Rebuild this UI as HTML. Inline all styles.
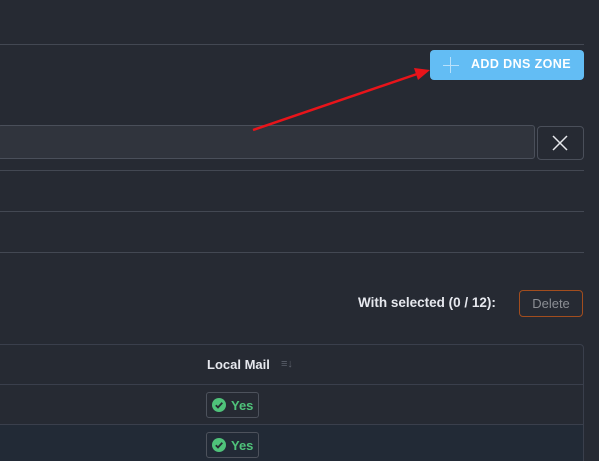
<!DOCTYPE html><html style="overflow:hidden;height:461px"><head><style>
body{margin:0;width:599px;height:461px;background:#262a33;font-family:"Liberation Sans",sans-serif;position:relative;overflow:hidden}
.a{position:absolute}
.hl{position:absolute;left:0;width:584px;height:1px;background:#434853}
</style></head><body>
<div class="hl" style="top:44px"></div>
<div class="a" style="left:430px;top:50px;width:154px;height:30px;background:#63bdf4;border-radius:4px"></div>
<div class="a" style="left:443px;top:65px;width:16px;height:1px;background:#b9e1fb"></div>
<div class="a" style="left:450px;top:57px;width:1px;height:16px;background:#b9e1fb"></div>
<div class="a" style="left:471px;top:57px;color:#fff;font-size:12.5px;font-weight:bold;letter-spacing:0.4px">ADD DNS ZONE</div>
<div class="a" style="left:-2px;top:125px;width:537px;height:34px;background:#30343d;border:1px solid #4a4f5a;border-radius:3px;box-sizing:border-box"></div>
<div class="a" style="left:537px;top:126px;width:47px;height:34px;border:1px solid #4a4f5a;border-radius:4px;box-sizing:border-box"></div>
<svg class="a" style="left:552px;top:135px" width="16" height="16"><path d="M1 1L15 15M15 1L1 15" stroke="#e6e8ec" stroke-width="1.5"/></svg>
<div class="hl" style="top:170px"></div>
<div class="hl" style="top:211px"></div>
<div class="hl" style="top:252px"></div>
<svg class="a" style="left:0;top:0" width="599" height="200"><path d="M253 130L420 73" stroke="#e8141a" stroke-width="2.5"/><path d="M430 70L414 68L418 80Z" fill="#e8141a"/></svg>
<div class="a" style="left:358px;top:295px;color:#e6e8ee;font-size:13.5px;font-weight:bold">With selected (0 / 12):</div>
<div class="a" style="left:519px;top:290px;width:64px;height:27px;border:1px solid #a24d1e;border-radius:4px;box-sizing:border-box;color:#8b8e94;font-size:13px;text-align:center;line-height:25px">Delete</div>
<div class="a" style="left:-5px;top:344px;width:589px;height:130px;border:1px solid #3a3f4c;border-radius:4px;box-sizing:border-box"></div>
<div class="a" style="left:207px;top:357px;color:#e6e8ee;font-size:13px;font-weight:bold">Local Mail</div>
<div class="a" style="left:281px;top:358px;color:#5b606b;font-size:11px">≡↓</div>
<div class="hl" style="top:384px;background:#3a3f4c"></div>
<div class="a" style="left:0;top:425px;width:583px;height:40px;background:#222a36"></div>
<div class="hl" style="top:424px;background:#3a3f4c"></div>
<div class="a" style="left:206px;top:392px;width:53px;height:26px;border:1px solid #4d525c;border-radius:3px;box-sizing:border-box"></div>
<div class="a" style="left:206px;top:432px;width:53px;height:26px;border:1px solid #4d525c;border-radius:3px;box-sizing:border-box"></div>
<svg class="a" style="left:212px;top:398px" width="14" height="14"><circle cx="7" cy="7" r="7" fill="#4fc27a"/><path d="M3.8 7.2L6 9.4L10.3 4.8" stroke="#262a33" stroke-width="1.8" fill="none"/></svg>
<svg class="a" style="left:212px;top:438px" width="14" height="14"><circle cx="7" cy="7" r="7" fill="#4fc27a"/><path d="M3.8 7.2L6 9.4L10.3 4.8" stroke="#262a33" stroke-width="1.8" fill="none"/></svg>
<div class="a" style="left:231px;top:398px;color:#4fc27a;font-size:13px;font-weight:bold">Yes</div>
<div class="a" style="left:231px;top:438px;color:#4fc27a;font-size:13px;font-weight:bold">Yes</div>
</body></html>
